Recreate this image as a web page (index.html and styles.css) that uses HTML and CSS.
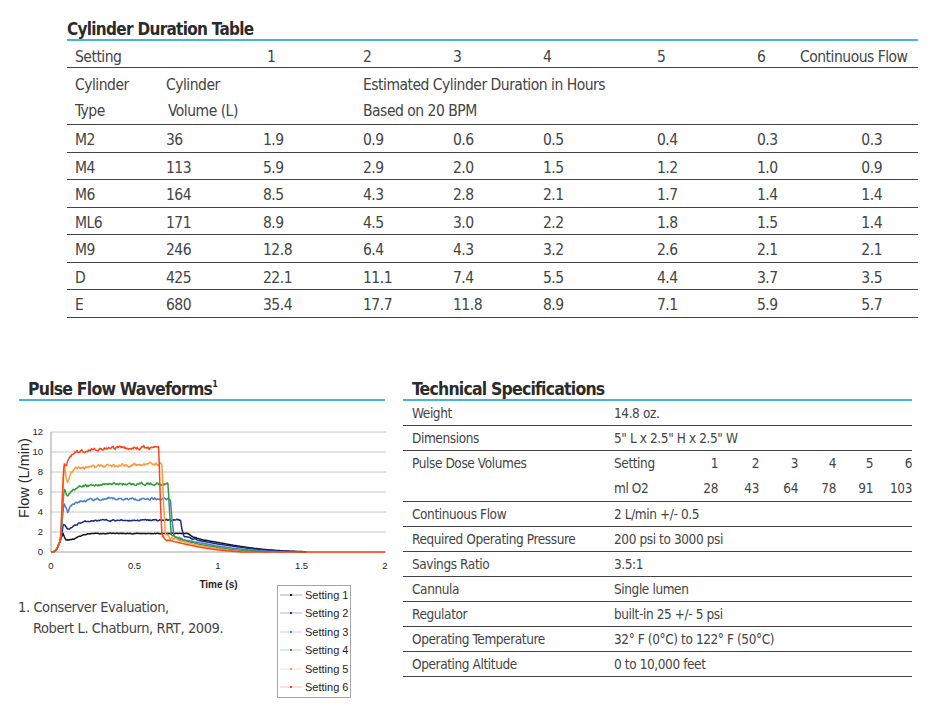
FILE: index.html
```html
<!DOCTYPE html>
<html lang="en">

<head>
  <meta charset="UTF-8">
  <meta name="viewport" content="width=device-width, initial-scale=1.0">
  <title>Oxygen Conserver Specifications</title>
  <link rel="stylesheet" href="styles.css">
</head>

<body>
  <div class="page">
    <section class="duration">
      <h2 class="section-title">Cylinder Duration Table</h2>
      <table class="duration-table">
        <colgroup>
          <col class="w-type">
          <col class="w-volume">
          <col class="w-s1">
          <col class="w-s2">
          <col class="w-s3">
          <col class="w-s4">
          <col class="w-s5">
          <col class="w-s6">
          <col class="w-cf">
        </colgroup>
        <thead>
          <tr class="setting-row">
            <th>Setting</th>
            <th></th>
            <th class="num-head">1</th>
            <th>2</th>
            <th>3</th>
            <th>4</th>
            <th>5</th>
            <th>6</th>
            <th>Continuous Flow</th>
          </tr>
          <tr class="label-row">
            <th>Cylinder<br>Type</th>
            <th>Cylinder<br><span class="volume">Volume (L)</span></th>
            <th></th>
            <th colspan="6">Estimated Cylinder Duration in Hours<br>Based on 20 BPM</th>
          </tr>
        </thead>
        <tbody>
          <tr><td>M2</td><td>36</td><td>1.9</td><td>0.9</td><td>0.6</td><td>0.5</td><td>0.4</td><td>0.3</td><td class="cf">0.3</td></tr>
          <tr><td>M4</td><td>113</td><td>5.9</td><td>2.9</td><td>2.0</td><td>1.5</td><td>1.2</td><td>1.0</td><td class="cf">0.9</td></tr>
          <tr><td>M6</td><td>164</td><td>8.5</td><td>4.3</td><td>2.8</td><td>2.1</td><td>1.7</td><td>1.4</td><td class="cf">1.4</td></tr>
          <tr><td>ML6</td><td>171</td><td>8.9</td><td>4.5</td><td>3.0</td><td>2.2</td><td>1.8</td><td>1.5</td><td class="cf">1.4</td></tr>
          <tr><td>M9</td><td>246</td><td>12.8</td><td>6.4</td><td>4.3</td><td>3.2</td><td>2.6</td><td>2.1</td><td class="cf">2.1</td></tr>
          <tr><td>D</td><td>425</td><td>22.1</td><td>11.1</td><td>7.4</td><td>5.5</td><td>4.4</td><td>3.7</td><td class="cf">3.5</td></tr>
          <tr><td>E</td><td>680</td><td>35.4</td><td>17.7</td><td>11.8</td><td>8.9</td><td>7.1</td><td>5.9</td><td class="cf">5.7</td></tr>
        </tbody>
      </table>
    </section>

    <div class="bottom">
      <section class="waveforms">
        <h2 class="section-title">Pulse Flow Waveforms<sup>1</sup></h2>
        <svg class="chart" width="385" height="163" viewBox="0 422 385 163">
          <g class="grid">
            <line x1="51" y1="432" x2="386" y2="432" />
            <line x1="51" y1="452" x2="386" y2="452" />
            <line x1="51" y1="472" x2="386" y2="472" />
            <line x1="51" y1="492" x2="386" y2="492" />
            <line x1="51" y1="512" x2="386" y2="512" />
            <line x1="51" y1="532" x2="386" y2="532" />
          </g>
          <g class="axis">
            <line x1="51" y1="432" x2="51" y2="552" />
            <line x1="51" y1="552" x2="386" y2="552" />
          </g>
          <g class="tick-labels y-labels">
            <text x="43" y="435">12</text>
            <text x="43" y="455">10</text>
            <text x="43" y="475">8</text>
            <text x="43" y="495">6</text>
            <text x="43" y="515">4</text>
            <text x="43" y="535">2</text>
            <text x="43" y="555">0</text>
          </g>
          <g class="tick-labels x-labels">
            <text x="51" y="569">0</text>
            <text x="134.5" y="569">0.5</text>
            <text x="218" y="569">1</text>
            <text x="301.5" y="569">1.5</text>
            <text x="385" y="569">2</text>
          </g>
          <text class="axis-title" x="-478" y="29" transform="rotate(-90)">Flow (L/min)</text>
          <text class="time-title" x="218.5" y="588">Time (s)</text>
          <g id="waves"></g>
        </svg>
        <div class="notes">
          <p class="footnote">1. Conserver Evaluation,<br>Robert L. Chatburn, RRT, 2009.</p>
          <ul class="legend">
            <li><svg class="marker" width="26" height="6"><line x1="2" y1="3" x2="24" y2="3" stroke="#151515" /><rect x="12" y="2" width="2" height="2" fill="#151515" /></svg>Setting 1</li>
            <li><svg class="marker" width="26" height="6"><line x1="2" y1="3" x2="24" y2="3" stroke="#1c2a8a" /><rect x="12" y="2" width="2" height="2" fill="#1c2a8a" /></svg>Setting 2</li>
            <li><svg class="marker" width="26" height="6"><line x1="2" y1="3" x2="24" y2="3" stroke="#4a7ed0" /><rect x="12" y="2" width="2" height="2" fill="#4a7ed0" /></svg>Setting 3</li>
            <li><svg class="marker" width="26" height="6"><line x1="2" y1="3" x2="24" y2="3" stroke="#2e9a3e" /><rect x="12" y="2" width="2" height="2" fill="#2e9a3e" /></svg>Setting 4</li>
            <li><svg class="marker" width="26" height="6"><line x1="2" y1="3" x2="24" y2="3" stroke="#ff9a3c" /><rect x="12" y="2" width="2" height="2" fill="#ff9a3c" /></svg>Setting 5</li>
            <li><svg class="marker" width="26" height="6"><line x1="2" y1="3" x2="24" y2="3" stroke="#ff4518" /><rect x="12" y="2" width="2" height="2" fill="#ff4518" /></svg>Setting 6</li>
          </ul>
        </div>
      </section>

      <section class="specs">
        <h2 class="section-title">Technical Specifications</h2>
        <div class="spec-row"><div class="spec-label">Weight</div><div>14.8 oz.</div></div>
        <div class="spec-row"><div class="spec-label">Dimensions</div><div>5" L x 2.5" H x 2.5" W</div></div>
        <div class="spec-row">
          <div class="spec-label">Pulse Dose Volumes</div>
          <div class="dose">
            <span class="dose-name">Setting</span><span>1</span><span>2</span><span>3</span><span>4</span><span>5</span><span>6</span>
            <span class="dose-name">ml O2</span><span>28</span><span>43</span><span>64</span><span>78</span><span>91</span><span>103</span>
          </div>
        </div>
        <div class="spec-row"><div class="spec-label">Continuous Flow</div><div>2 L/min +/- 0.5</div></div>
        <div class="spec-row"><div class="spec-label">Required Operating Pressure</div><div>200 psi to 3000 psi</div></div>
        <div class="spec-row"><div class="spec-label">Savings Ratio</div><div>3.5:1</div></div>
        <div class="spec-row"><div class="spec-label">Cannula</div><div>Single lumen</div></div>
        <div class="spec-row"><div class="spec-label">Regulator</div><div>built-in 25 +/- 5 psi</div></div>
        <div class="spec-row"><div class="spec-label">Operating Temperature</div><div>32° F (0°C) to 122° F (50°C)</div></div>
        <div class="spec-row"><div class="spec-label">Operating Altitude</div><div>0 to 10,000 feet</div></div>
      </section>
    </div>
  </div>

  <script src="script.js"></script>
</body>

</html>
```

FILE: styles.css
```css
body {
  margin: 0;
  background-color: #fff;
  color: #444;
  font-family: "DejaVu Sans Condensed", "Liberation Sans Narrow", sans-serif;
}

.page {
  width: 931px;
  padding-top: 19px;
}

.section-title {
  margin: 0;
  font-size: 17.5px;
  line-height: 20px;
  letter-spacing: -0.8px;
  font-weight: bold;
  color: #2b2b2b;
  border-bottom: 2px solid #45b5d9;
}

.section-title sup {
  font-size: 9px;
  vertical-align: 8px;
  line-height: 0;
}

/* cylinder duration table */

.duration {
  margin-left: 67px;
  width: 851px;
}

.duration .section-title {
  font-size: 17px;
  letter-spacing: -0.7px;
}

.duration-table {
  width: 851px;
  table-layout: fixed;
  border-collapse: collapse;
  font-size: 15.5px;
  letter-spacing: -0.5px;
}

.duration-table th,
.duration-table td {
  padding: 0 0 0 8px;
  text-align: left;
  font-weight: normal;
  vertical-align: top;
  white-space: nowrap;
}

.w-type { width: 91px; }
.w-volume { width: 97px; }
.w-s1 { width: 100px; }
.w-s2 { width: 90px; }
.w-s3 { width: 90px; }
.w-s4 { width: 114px; }
.w-s5 { width: 100px; }
.w-s6 { width: 43px; }
.w-cf { width: 126px; }

.num-head {
  text-indent: 4px;
}

.setting-row th {
  padding-top: 6px;
  line-height: 20px;
  border-bottom: 1px solid #444;
}

.label-row th {
  padding-top: 4px;
  line-height: 26px;
  border-bottom: 1px solid #444;
}

.volume {
  margin-left: 2px;
}

.duration-table tbody td {
  padding-top: 4px;
  line-height: 22.5px;
  border-bottom: 1px solid #444;
}

.duration-table td.cf {
  text-align: right;
  padding-right: 36px;
}

/* bottom half */

.bottom {
  display: flex;
  margin-top: 61px;
}

.waveforms {
  width: 385px;
}

.waveforms .section-title {
  margin-left: 19px;
  padding-left: 9px;
}

.chart {
  display: block;
  margin-top: 21px;
  overflow: visible;
  font-family: "Liberation Sans", Arial, sans-serif;
}

.grid line {
  stroke: #c6c6c6;
  stroke-width: 1;
}

.axis line {
  stroke: #a0a0a0;
  stroke-width: 1;
}

.tick-labels text {
  font-size: 9.5px;
  fill: #1e1e1e;
}

.y-labels text {
  text-anchor: end;
}

.x-labels text {
  text-anchor: middle;
}

.axis-title {
  font-size: 14.5px;
  fill: #2a2a2a;
  text-anchor: middle;
}

.time-title {
  font-size: 10px;
  font-weight: bold;
  fill: #1e1e1e;
  text-anchor: middle;
}

.wave {
  fill: none;
  stroke-width: 1.5;
  stroke-linejoin: round;
}

.notes {
  display: flex;
  align-items: flex-start;
}

.footnote {
  flex: none;
  width: 244px;
  margin: 12px 0 0 18px;
  padding-left: 15px;
  text-indent: -15px;
  font-size: 14.5px;
  letter-spacing: -0.4px;
  line-height: 21px;
  color: #444;
}

.legend {
  list-style: none;
  margin: 0;
  padding: 0 2px 0 0;
  border: 1px solid #a6a6a6;
  font-family: "Liberation Sans", Arial, sans-serif;
  font-size: 11px;
  color: #1e1e1e;
}

.legend li {
  display: flex;
  align-items: center;
  height: 18.5px;
}

.marker {
  margin-right: 1px;
}

.marker line {
  stroke-opacity: 0.35;
}

/* technical specifications */

.specs {
  margin-left: 18px;
  width: 509px;
  font-size: 13.5px;
  letter-spacing: -0.4px;
}

.specs .section-title {
  padding-left: 9px;
  letter-spacing: -0.8px;
}

.spec-row {
  display: grid;
  grid-template-columns: 211px 1fr;
  line-height: 24px;
  border-bottom: 1px solid #444;
}

.spec-label {
  padding-left: 9px;
}

.dose {
  display: grid;
  grid-template-columns: 76px 28px 41px 39px 38px 37px 39px;
  line-height: 25px;
  text-align: right;
}

.dose .dose-name {
  text-align: left;
}
```

FILE: script.js
```js
// draws the six pulse flow curves from a few key points per setting
const X0 = 51;
const Y0 = 552;
const PX_PER_SEC = 167;
const PX_PER_LPM = 10;

const rise = [[0, 0], [0.02, 0.05], [0.035, 0.3], [0.05, 0.9], [0.058, 1.3]];

const waveforms = [
  {
    color: '#151515', noise: 0.03,
    points: rise.concat([[0.066, 1.6], [0.072, 1.9], [0.08, 1.5], [0.09, 1.2], [0.14, 1.3], [0.16, 1.5],
      [0.19, 1.65], [0.22, 1.8], [0.28, 1.85], [0.82, 1.85], [0.85, 1.5], [0.9, 1.25], [1.0, 0.95],
      [1.1, 0.65], [1.2, 0.4], [1.3, 0.22], [1.4, 0.1], [1.52, 0.03], [1.53, 0]])
  },
  {
    color: '#1c2a8a', noise: 0.06,
    points: rise.concat([[0.066, 2.0], [0.074, 2.8], [0.085, 2.6], [0.1, 2.3], [0.13, 2.5], [0.17, 2.9],
      [0.22, 3.1], [0.3, 3.15], [0.775, 3.2], [0.785, 2.2], [0.795, 1.6], [0.85, 1.3], [0.9, 1.1],
      [1.0, 0.8], [1.1, 0.55], [1.2, 0.33], [1.3, 0.17], [1.4, 0.07], [1.5, 0.02], [1.52, 0]])
  },
  {
    color: '#4a7ed0', noise: 0.1,
    points: rise.concat([[0.068, 3.2], [0.078, 4.9], [0.088, 4.5], [0.1, 4.0], [0.12, 4.6], [0.16, 5.0],
      [0.25, 5.2], [0.35, 5.3], [0.715, 5.35], [0.725, 3.2], [0.735, 1.6], [0.8, 1.2], [0.9, 0.9],
      [1.0, 0.6], [1.1, 0.35], [1.2, 0.18], [1.3, 0.07], [1.4, 0]])
  },
  {
    color: '#2e9a3e', noise: 0.1,
    points: rise.concat([[0.068, 4.0], [0.078, 6.3], [0.09, 5.9], [0.1, 5.6], [0.13, 6.3], [0.2, 6.6],
      [0.35, 6.8], [0.7, 6.8], [0.71, 4.0], [0.72, 1.7], [0.78, 1.25], [0.88, 0.8], [1.0, 0.45],
      [1.1, 0.2], [1.25, 0.05], [1.3, 0]])
  },
  {
    color: '#ff9a3c', noise: 0.12,
    points: rise.concat([[0.068, 5.0], [0.078, 8.7], [0.09, 7.6], [0.098, 7.0], [0.12, 8.0], [0.15, 8.4],
      [0.3, 8.6], [0.665, 8.8], [0.675, 4.5], [0.685, 1.7], [0.72, 1.4], [0.8, 1.0], [0.9, 0.6],
      [1.0, 0.3], [1.1, 0.1], [1.2, 0]])
  },
  {
    color: '#ff4518', noise: 0.13,
    points: rise.concat([[0.068, 5.5], [0.078, 8.9], [0.09, 8.5], [0.11, 9.5], [0.15, 10.0], [0.25, 10.3],
      [0.4, 10.4], [0.645, 10.4], [0.655, 5.0], [0.665, 1.6], [0.7, 1.2], [0.8, 0.8], [0.9, 0.45],
      [1.0, 0.2], [1.1, 0.05], [1.15, 0], [2.0, 0]])
  }
];

let seed = 11;
function rand() {
  seed = (seed * 16807) % 2147483647;
  return seed / 2147483647;
}

function flowAt(points, t) {
  for (let i = 1; i < points.length; i++) {
    if (t <= points[i][0]) {
      const [t0, f0] = points[i - 1];
      const [t1, f1] = points[i];
      return f0 + (f1 - f0) * (t - t0) / (t1 - t0);
    }
  }
  return points[points.length - 1][1];
}

const waves = document.getElementById('waves');

waveforms.forEach(function (wave) {
  const end = wave.points[wave.points.length - 1][0];
  const coords = [];
  let wobble = 0;
  for (let t = 0; t <= end + 0.0001; t += 0.004) {
    let flow = flowAt(wave.points, t);
    wobble = wobble * 0.6 + (rand() - 0.5) * wave.noise * 2;
    if (flow > 1.2) flow += wobble;
    coords.push((X0 + t * PX_PER_SEC).toFixed(1) + ',' + (Y0 - flow * PX_PER_LPM).toFixed(1));
  }
  const line = document.createElementNS('http://www.w3.org/2000/svg', 'polyline');
  line.setAttribute('points', coords.join(' '));
  line.setAttribute('stroke', wave.color);
  line.setAttribute('class', 'wave');
  waves.appendChild(line);
});
```
